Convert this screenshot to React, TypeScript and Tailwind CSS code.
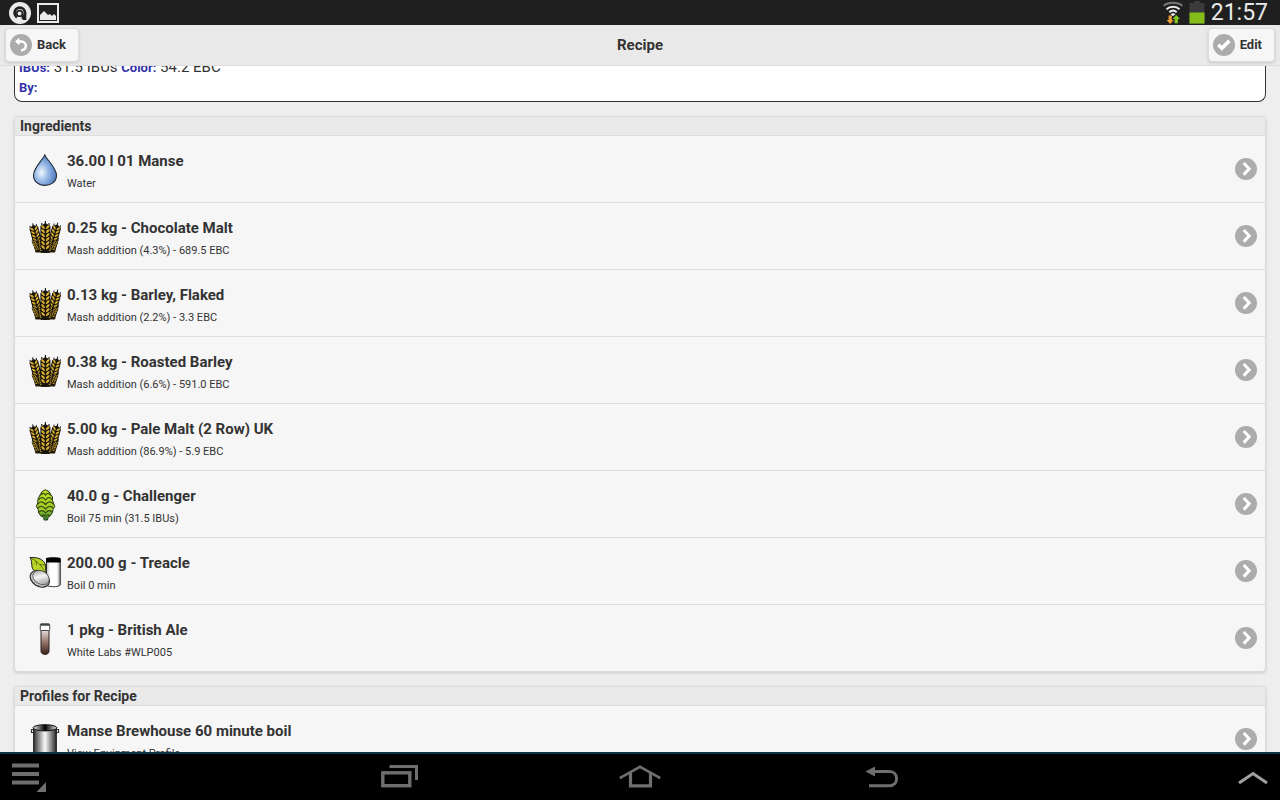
import type { ReactNode } from 'react';

type IconName = 'water' | 'grain' | 'hop' | 'misc' | 'yeast' | 'pot';

type Item = {
  id: string;
  icon: IconName;
  title: string;
  detail: string;
};

const ingredients: Item[] = [
  { id: 'water', icon: 'water', title: '36.00 l 01 Manse', detail: 'Water' },
  { id: 'chocolate', icon: 'grain', title: '0.25 kg - Chocolate Malt', detail: 'Mash addition (4.3%) - 689.5 EBC' },
  { id: 'flaked', icon: 'grain', title: '0.13 kg - Barley, Flaked', detail: 'Mash addition (2.2%) - 3.3 EBC' },
  { id: 'roasted', icon: 'grain', title: '0.38 kg - Roasted Barley', detail: 'Mash addition (6.6%) - 591.0 EBC' },
  { id: 'pale', icon: 'grain', title: '5.00 kg - Pale Malt (2 Row) UK', detail: 'Mash addition (86.9%) - 5.9 EBC' },
  { id: 'challenger', icon: 'hop', title: '40.0 g - Challenger', detail: 'Boil 75 min (31.5 IBUs)' },
  { id: 'treacle', icon: 'misc', title: '200.00 g - Treacle', detail: 'Boil 0 min' },
  { id: 'ale', icon: 'yeast', title: '1 pkg - British Ale', detail: 'White Labs #WLP005' }
];

const profiles: Item[] = [
  { id: 'equipment', icon: 'pot', title: 'Manse Brewhouse 60 minute boil', detail: 'View Equipment Profile' }
];

function WaterIcon() {
  return (
    <svg viewBox="0 0 32 32" className="size-8" aria-hidden="true">
      <defs>
        <radialGradient id="drop" cx="0.35" cy="0.58" r="0.6">
          <stop offset="0" stopColor="#f0f6fd" />
          <stop offset="0.45" stopColor="#9dbde6" />
          <stop offset="1" stopColor="#5580c4" />
        </radialGradient>
      </defs>
      <path
        d="M15.8 .8C14.5 5 4.5 13.5 4.5 21.3C4.5 27.5 9.5 31.4 16 31.4S27.5 27.5 27.5 21.3C27.5 13.5 17 5 15.8 .8Z"
        fill="url(#drop)"
        stroke="#222b38"
        strokeWidth="1.1"
      />
    </svg>
  );
}

const kernelRows = [4, 8, 12, 16, 20, 24];

function Stalk() {
  return (
    <g>
      <path d="M0 -1V4M-3.6 4V1M3.6 4V1" stroke="#111" strokeWidth="1.1" />
      <path d="M0 1L5 4V25L2 31H-2L-5 25V4Z" fill="#17140a" />
      {kernelRows.map((y) => (
        <g key={y} fill="#dcb030">
          <path d={`M-.5 ${y + 3.2}C-2.5 ${y + 3} -4.6 ${y + 1} -4 ${y - 1}C-2 ${y - 0.5} -.5 ${y + 0.6} -.5 ${y + 3.2}Z`} />
          <path d={`M.5 ${y + 3.2}C2.5 ${y + 3} 4.6 ${y + 1} 4 ${y - 1}C2 ${y - 0.5} .5 ${y + 0.6} .5 ${y + 3.2}Z`} />
        </g>
      ))}
    </g>
  );
}

function GrainIcon() {
  return (
    <svg viewBox="0 0 32 32" className="size-8" aria-hidden="true">
      <path d="M3 17L12 14H21L30 17L26 31.5H6.5Z" fill="#2b220a" />
      <g transform="translate(3.8 3.2) rotate(-15) scale(.9)">
        <Stalk />
      </g>
      <g transform="translate(28.6 2.6) rotate(15) scale(.9)">
        <Stalk />
      </g>
      <g transform="translate(4 18.5) rotate(-24) scale(.42)">
        <Stalk />
      </g>
      <g transform="translate(28 18.5) rotate(24) scale(.42)">
        <Stalk />
      </g>
      <g transform="translate(11 16.5) rotate(-8) scale(.5)">
        <Stalk />
      </g>
      <g transform="translate(21.5 16.5) rotate(8) scale(.5)">
        <Stalk />
      </g>
      <g transform="translate(16.4 1)">
        <Stalk />
      </g>
    </svg>
  );
}

function HopIcon() {
  return (
    <svg viewBox="0 0 32 32" className="size-8" aria-hidden="true">
      <defs>
        <linearGradient id="hop" x1="0" y1="0" x2="0" y2="1">
          <stop offset="0" stopColor="#c0df28" />
          <stop offset="0.65" stopColor="#a4c92a" />
          <stop offset="1" stopColor="#28803b" />
        </linearGradient>
      </defs>
      <path
        d="M16.5 .7L20 2.6L22 6L23.5 8L23.5 11.5L24.5 14L25.7 17.5L24 20.5L23.5 23.5L21 27L19 28.3L18.5 31H15.2L14.6 28.3L12 27L9.7 24L9.2 20.5L7.3 17.5L8.7 14L9 10L11 6L13 2.6Z"
        fill="url(#hop)"
        stroke="#29360f"
        strokeWidth="1"
      />
      <g fill="none" stroke="#34500f" strokeWidth="1.2">
        <path d="M11.5 6.5C13 3.5 15 4 16.5 6C18 4 20.5 3.5 21.7 6.5" />
        <path d="M9.5 11C11.5 7.5 14.5 8 16.5 11C18.5 8 21.5 7.5 23.3 11" />
        <path d="M8.8 15.5C11 11.5 14 12.5 16.5 15.5C19 12.5 22 11.5 24.5 15.5" />
        <path d="M8.5 19.5C11 16 14 17 16.5 20C19 17 22 16 24.5 19.5" />
        <path d="M9.8 23.5C12 20.5 14.5 21.5 16.5 24C18.5 21.5 21 20.5 23.2 23.5" />
        <path d="M13 27.3C14 25 15.5 25.5 16.7 27.5C17.8 25.5 19.5 25 20.5 27" />
      </g>
    </svg>
  );
}

function MiscIcon() {
  return (
    <svg viewBox="0 0 32 32" className="size-8" aria-hidden="true">
      <defs>
        <linearGradient id="jar" x1="0" x2="1">
          <stop offset="0" stopColor="#b9b9b9" />
          <stop offset="0.25" stopColor="#fff" />
          <stop offset="0.75" stopColor="#fff" />
          <stop offset="1" stopColor="#8d8d8d" />
        </linearGradient>
        <linearGradient id="coin" x1="0" y1="0" x2="1" y2="0.7">
          <stop offset="0" stopColor="#8b8b8b" />
          <stop offset="0.5" stopColor="#f4f4f4" />
          <stop offset="1" stopColor="#9b9b9b" />
        </linearGradient>
      </defs>
      <path d="M17.5 3V29C19 31.2 30 31.2 31.3 29V3Z" fill="url(#jar)" stroke="#222" strokeWidth="0.9" />
      <path d="M17 2.2C19 .9 30 .9 31.6 2.2V6.5H17Z" fill="#000" />
      <path d="M1 1.5C9 1 15 3.5 16.5 9L17 18C10 18 4 16 3 11C2.6 7 2.6 4 1 1.5Z" fill="#b7d422" stroke="#222" strokeWidth="1" />
      <path d="M2 2C8 5 13 10 16.5 17M7 5L7.5 9M11 8.5L16 9" fill="none" stroke="#47590f" strokeWidth="0.8" />
      <ellipse cx="10.8" cy="22.8" rx="10.3" ry="7.5" transform="rotate(32 10.8 22.8)" fill="#ccc" stroke="#222" strokeWidth="1.1" />
      <ellipse cx="12" cy="21.6" rx="8.8" ry="6.5" transform="rotate(32 12 21.6)" fill="url(#coin)" stroke="#444" strokeWidth="0.7" />
      <path d="M1.5 24.5L3.5 24M4.5 28L6 26.3M9 30.5L10 29" stroke="#444" strokeWidth="0.8" />
    </svg>
  );
}

function YeastIcon() {
  return (
    <svg viewBox="0 0 32 32" className="size-8" aria-hidden="true">
      <defs>
        <linearGradient id="yeast" x1="0" y1="0" x2="0" y2="1">
          <stop offset="0" stopColor="#e7dfdc" />
          <stop offset="0.5" stopColor="#96766b" />
          <stop offset="1" stopColor="#3c2018" />
        </linearGradient>
      </defs>
      <path d="M12 7V28.5C12 32.3 20 32.3 20 28.5V7Z" fill="url(#yeast)" stroke="#2c2422" strokeWidth="1" />
      <rect x="11.3" y="1" width="9.4" height="6.5" rx="1" fill="#fff" stroke="#333" strokeWidth="0.9" />
      <rect x="11.3" y="0.6" width="9.4" height="2.2" rx="1" fill="#444" />
    </svg>
  );
}

function PotIcon() {
  return (
    <svg viewBox="0 0 32 32" className="size-8" aria-hidden="true">
      <defs>
        <linearGradient id="steel" x1="0" x2="1">
          <stop offset="0" stopColor="#333" />
          <stop offset="0.5" stopColor="#fafafa" />
          <stop offset="1" stopColor="#2a2a2a" />
        </linearGradient>
        <linearGradient id="inside" x1="0" x2="1">
          <stop offset="0" stopColor="#eee" />
          <stop offset="0.5" stopColor="#000" />
          <stop offset="1" stopColor="#ddd" />
        </linearGradient>
      </defs>
      <path d="M4.5 5.5H2.5V8.5H5M27.5 5.5H29.5V8.5H27" fill="none" stroke="#333" strokeWidth="1.2" />
      <path d="M4.7 3.5V31H27.3V3.5Z" fill="url(#steel)" stroke="#111" strokeWidth="1" />
      <ellipse cx="16" cy="3.8" rx="12" ry="3.1" fill="url(#inside)" stroke="#111" strokeWidth="1" />
    </svg>
  );
}

const icons: Record<IconName, () => ReactNode> = {
  water: WaterIcon,
  grain: GrainIcon,
  hop: HopIcon,
  misc: MiscIcon,
  yeast: YeastIcon,
  pot: PotIcon
};

function CircleIcon({ children }: { children: ReactNode }) {
  return (
    <svg viewBox="0 0 22 22" className="size-[22px] shrink-0" aria-hidden="true">
      <circle cx="11" cy="11" r="11" fill="#acacac" />
      {children}
    </svg>
  );
}

function ListCard({ heading, items }: { heading: string; items: Item[] }) {
  return (
    <section className="shrink-0 overflow-hidden rounded border border-[#dcdcdc] bg-[#f6f6f6] shadow-[0_1px_3px_rgba(0,0,0,0.15)]">
      <h2 className="border-b border-[#dcdcdc] bg-[#e9e9e9] px-[5px] text-sm leading-[18px] font-bold">{heading}</h2>
      <ul className="divide-y divide-[#dddddd]">
        {items.map((item) => {
          const Icon = icons[item.icon];
          return (
            <li key={item.id}>
              <a href={`#${item.id}`} className="flex items-center pr-2 pl-[14px]">
                <div className="flex min-w-0 flex-1 gap-[6px] pt-[15px] pb-[10px]">
                  <div className="pt-[3px]">
                    <Icon />
                  </div>
                  <div className="min-w-0 flex-1">
                    <h3 className="truncate text-[15px] leading-5 font-bold">{item.title}</h3>
                    <p className="mt-[5px] truncate text-[11px] leading-4">{item.detail}</p>
                  </div>
                </div>
                <CircleIcon>
                  <path d="M8.7 5L14.2 10.8L8.7 16.6" fill="none" stroke="#fff" strokeWidth="3" />
                </CircleIcon>
              </a>
            </li>
          );
        })}
      </ul>
    </section>
  );
}

function StatusBar() {
  return (
    <div className="flex h-[25px] shrink-0 items-center justify-between bg-[#1f1f1f] pr-3 pl-2 text-[#eaeaea]">
      <div className="flex items-center gap-[5px]">
        <svg viewBox="0 0 24 24" className="size-6" aria-hidden="true">
          <circle cx="12" cy="12" r="11" fill="#eaeaea" />
          <circle cx="11.8" cy="11.8" r="5.2" fill="none" stroke="#1f1f1f" strokeWidth="2.8" />
          <path d="M9.5 14.5L13.6 13.8V19H8Z" fill="#eaeaea" />
          <circle cx="11.6" cy="12.4" r="2.8" fill="none" stroke="#1f1f1f" strokeWidth="1.6" />
          <path d="M17 11.5V17.6H14.6" fill="none" stroke="#1f1f1f" strokeWidth="2.6" />
        </svg>
        <svg viewBox="0 0 22 20" className="h-5 w-[22px]" aria-hidden="true">
          <rect x="1" y="1" width="20" height="18" fill="none" stroke="#eaeaea" strokeWidth="2" />
          <path d="M3 17V12L7 8L11 12L13 11L15 13L17 11L19 13V17Z" fill="#eaeaea" />
        </svg>
      </div>
      <div className="flex items-center">
        <svg viewBox="0 0 20 24" className="h-6 w-5" aria-hidden="true">
          <g fill="none" strokeWidth="2">
            <path d="M.7 4.8C5.5 .7 14.5 .7 19.3 4.8" stroke="#777" />
            <path d="M3.5 8.2C7 5 13 5 16.5 8.2" stroke="#eaeaea" />
            <path d="M6.3 11.2C8.5 9.3 11.5 9.3 13.7 11.2" stroke="#eaeaea" />
          </g>
          <path d="M7.5 13.2C9 12 11 12 12.5 13.2L10 15.2Z" fill="#eaeaea" />
          <path d="M5.6 14.5H8.8V19H10.8L7.2 23L3.6 19H5.6Z" fill="#eda038" />
          <path d="M13.2 14L17 18H14.9V22.3H11.6V18H9.6Z" fill="#7fc81a" />
        </svg>
        <svg viewBox="0 0 16 23" className="mr-[6px] ml-[6px] h-[23px] w-4" aria-hidden="true">
          <path d="M0.5 2H5V0H11V2H15.5V23H0.5Z" fill="#3b3b3b" />
          <rect x="0.5" y="11.5" width="15" height="11" fill="#84bd17" />
        </svg>
        <time className="text-[23px] leading-6">21:57</time>
      </div>
    </div>
  );
}

function Header() {
  return (
    <header className="flex h-[41px] shrink-0 items-center justify-between border-b border-[#dddddd] bg-[#e9e9e9] px-[5px]">
      <div className="flex-1">
        <button className="flex h-[34px] items-center gap-[5px] rounded border border-[#dcdcdc] bg-[#f6f6f6] pr-3 pl-1 text-[13px] font-bold shadow-[0_1px_3px_rgba(0,0,0,0.15)]">
          <CircleIcon>
            <path d="M5.5 7.5L9 4.6V10.4Z" fill="#fff" stroke="#fff" strokeLinejoin="round" />
            <path d="M8 7.5H11C14 7.5 15.8 9.5 15.8 11.8C15.8 14.4 14 16.2 11 16.2" fill="none" stroke="#fff" strokeWidth="2.4" />
          </CircleIcon>
          Back
        </button>
      </div>
      <h1 className="text-[15px] leading-5 font-bold">Recipe</h1>
      <div className="flex flex-1 justify-end">
        <button className="flex h-[34px] items-center gap-[5px] rounded border border-[#dcdcdc] bg-[#f6f6f6] pr-3 pl-1 text-[13px] font-bold shadow-[0_1px_3px_rgba(0,0,0,0.15)]">
          <CircleIcon>
            <path d="M5.3 10.8L8.8 14.3L16.4 6.9" fill="none" stroke="#fff" strokeWidth="3.6" />
          </CircleIcon>
          Edit
        </button>
      </div>
    </header>
  );
}

function NavBar() {
  return (
    <nav className="flex h-12 shrink-0 items-center justify-between border-t-2 border-[#0b3245] bg-black px-3">
      <button aria-label="Menu">
        <svg viewBox="0 0 36 30" className="h-[30px] w-9" fill="#6e6e6e" aria-hidden="true">
          <path d="M0 1.5H27V5.5H0ZM0 10H27V14H0ZM0 18.5H27V22.5H0ZM34 20V30H24.5Z" />
        </svg>
      </button>
      <div className="flex items-center gap-[200px]">
        <button aria-label="Recent apps">
          <svg viewBox="0 0 42 24" className="h-6 w-[42px]" fill="none" stroke="#6e6e6e" aria-hidden="true">
            <rect x="5.8" y="7.8" width="27" height="12.9" strokeWidth="3.4" />
            <path d="M12.5 1.5H39.5V15" strokeWidth="3" />
          </svg>
        </button>
        <button aria-label="Home">
          <svg viewBox="0 0 42 24" className="h-6 w-[42px]" fill="none" stroke="#6e6e6e" aria-hidden="true">
            <path d="M.7 13.2L21 1.8L41.3 13.2" strokeWidth="2.6" />
            <path d="M11.5 8V20.8H31.5V8" strokeWidth="3.2" />
          </svg>
        </button>
        <button aria-label="Back">
          <svg viewBox="0 0 42 24" className="h-6 w-[42px]" aria-hidden="true">
            <path d="M4.5 6.5L14 1.5V11.5Z" fill="#6e6e6e" />
            <path d="M13 6.5H28.5C38 6.5 38 20.7 28.5 20.7H8" fill="none" stroke="#6e6e6e" strokeWidth="3" />
          </svg>
        </button>
      </div>
      <button aria-label="Expand" className="flex w-9 justify-end">
        <svg viewBox="0 0 30 24" className="h-6 w-[30px]" fill="none" stroke="#a0a0a0" aria-hidden="true">
          <path d="M1 18L15 8.5L29 18" strokeWidth="3" />
        </svg>
      </button>
    </nav>
  );
}

export default function App() {
  return (
    <div className="flex h-screen flex-col overflow-hidden bg-[#eeeeee] font-['Roboto',sans-serif] text-[#333333]">
      <StatusBar />
      <Header />
      <main className="flex min-h-0 flex-1 flex-col gap-[14px] overflow-hidden px-[14px]">
        {/* summary box, scrolled so that only its last lines show */}
        <div className="flex h-9 shrink-0 flex-col justify-end overflow-hidden rounded-b-lg border-x border-b border-[#333333] bg-white px-1 pb-[3px] text-[13px]">
          <p className="text-[15px] leading-5">
            <b className="text-[13px] text-[#3333aa]">IBUs:</b> 31.5 IBUs <b className="text-[13px] text-[#3333aa]">Color:</b> 54.2 EBC
          </p>
          <p className="leading-5">
            <b className="text-[#3333aa]">By:</b>
          </p>
        </div>
        <ListCard heading="Ingredients" items={ingredients} />
        <ListCard heading="Profiles for Recipe" items={profiles} />
      </main>
      <NavBar />
    </div>
  );
}
